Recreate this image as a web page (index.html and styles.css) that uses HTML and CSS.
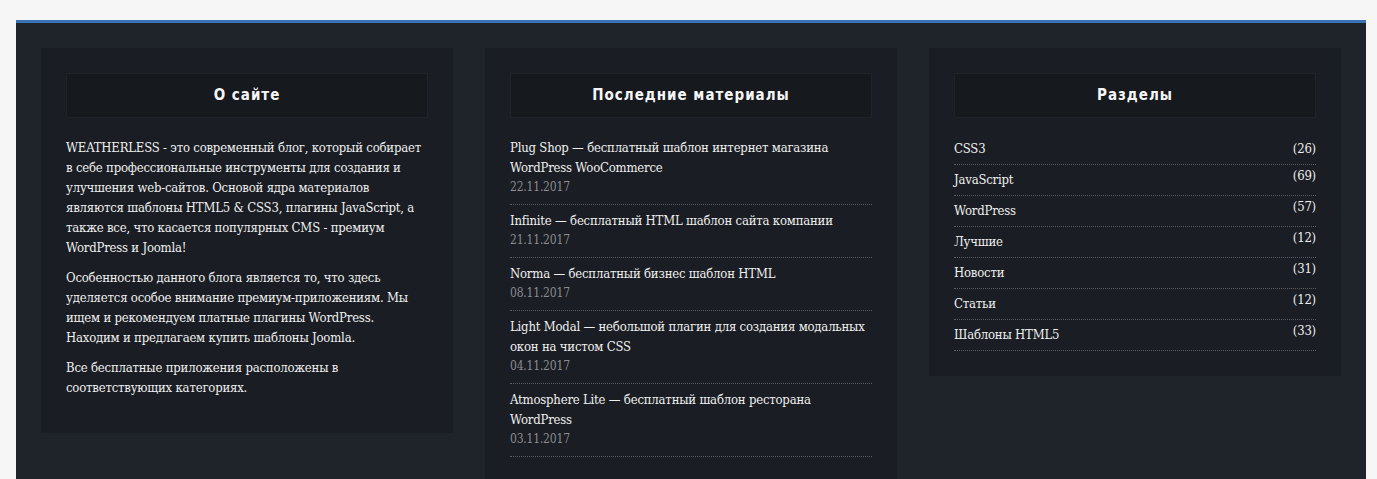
FILE: index.html
```html
<!DOCTYPE html>
<html lang="ru">
<head>
<meta charset="utf-8">
<title>Footer</title>
<link rel="stylesheet" href="styles.css">
</head>
<body>
<footer class="footer">
  <section class="widget">
    <h3 class="widget-title">О сайте</h3>
    <div class="about">
      <p>WEATHERLESS - это современный блог, который собирает в себе профессиональные инструменты для создания и улучшения web-сайтов. Основой ядра материалов являются шаблоны HTML5 &amp; CSS3, плагины JavaScript, а также все, что касается популярных CMS - премиум WordPress и Joomla!</p>
      <p>Особенностью данного блога является то, что здесь уделяется особое внимание премиум-приложениям. Мы ищем и рекомендуем платные плагины WordPress. Находим и предлагаем купить шаблоны Joomla.</p>
      <p>Все бесплатные приложения расположены в соответствующих категориях.</p>
    </div>
  </section>
  <section class="widget">
    <h3 class="widget-title">Последние материалы</h3>
    <ul class="posts">
      <li><a href="#">Plug Shop — бесплатный шаблон интернет магазина WordPress WooCommerce</a><span class="date">22.11.2017</span></li>
      <li><a href="#">Infinite — бесплатный HTML шаблон сайта компании</a><span class="date">21.11.2017</span></li>
      <li><a href="#">Norma — бесплатный бизнес шаблон HTML</a><span class="date">08.11.2017</span></li>
      <li><a href="#">Light Modal — небольшой плагин для создания модальных окон на чистом CSS</a><span class="date">04.11.2017</span></li>
      <li><a href="#">Atmosphere Lite — бесплатный шаблон ресторана WordPress</a><span class="date">03.11.2017</span></li>
    </ul>
  </section>
  <section class="widget">
    <h3 class="widget-title">Разделы</h3>
    <ul class="cats">
      <li><a href="#">CSS3</a><span class="count">(26)</span></li>
      <li><a href="#">JavaScript</a><span class="count">(69)</span></li>
      <li><a href="#">WordPress</a><span class="count">(57)</span></li>
      <li><a href="#">Лучшие</a><span class="count">(12)</span></li>
      <li><a href="#">Новости</a><span class="count">(31)</span></li>
      <li><a href="#">Статьи</a><span class="count">(12)</span></li>
      <li><a href="#">Шаблоны HTML5</a><span class="count">(33)</span></li>
    </ul>
  </section>
</footer>
</body>
</html>
```

FILE: styles.css
```css
html, body {
  margin: 0;
  padding: 0;
}
body {
  background: #f6f6f6;
  padding: 20px 11px 0 16px;
  font-family: "DejaVu Serif Condensed", "DejaVu Serif", serif;
  font-size: 13px;
  line-height: 20px;
  letter-spacing: -0.2px;
  color: #efefef;
}
.footer {
  display: grid;
  grid-template-columns: repeat(3, 412px);
  gap: 32px;
  align-items: start;
  padding: 25px 25px 40px;
  background: #1f232a;
  border-top: 3px solid #3a74b6;
  min-height: 500px;
}
.widget {
  background: #1a1d23;
  padding: 25px;
}
.widget-title {
  margin: 0;
  height: 43px;
  line-height: 43px;
  text-align: center;
  background: #16191d;
  border: 1px solid #202328;
  font-family: "DejaVu Sans Condensed", "DejaVu Sans", sans-serif;
  font-weight: bold;
  font-size: 15px;
  letter-spacing: 1px;
  color: #f6f6f6;
}
.about {
  margin-top: 20px;
}
.about p {
  margin: 0 0 10px;
}
a {
  color: #efefef;
  text-decoration: none;
}
.posts, .cats {
  list-style: none;
  margin: 0;
  padding: 0;
}
.posts {
  margin-top: 14px;
}
.posts li {
  padding: 6px 0 8px;
  border-bottom: 1px dotted #5a5d62;
}
.posts a {
  display: block;
}
.date {
  display: block;
  font-size: 12px;
  line-height: 18px;
  color: #8a8c8f;
}
.cats {
  margin-top: 16px;
}
.cats li {
  display: flex;
  justify-content: space-between;
  align-items: flex-start;
  padding: 5px 0;
  border-bottom: 1px dotted #5a5d62;
}
.cats li:not(:first-child) .count {
  transform: translateY(-4px);
}
```
